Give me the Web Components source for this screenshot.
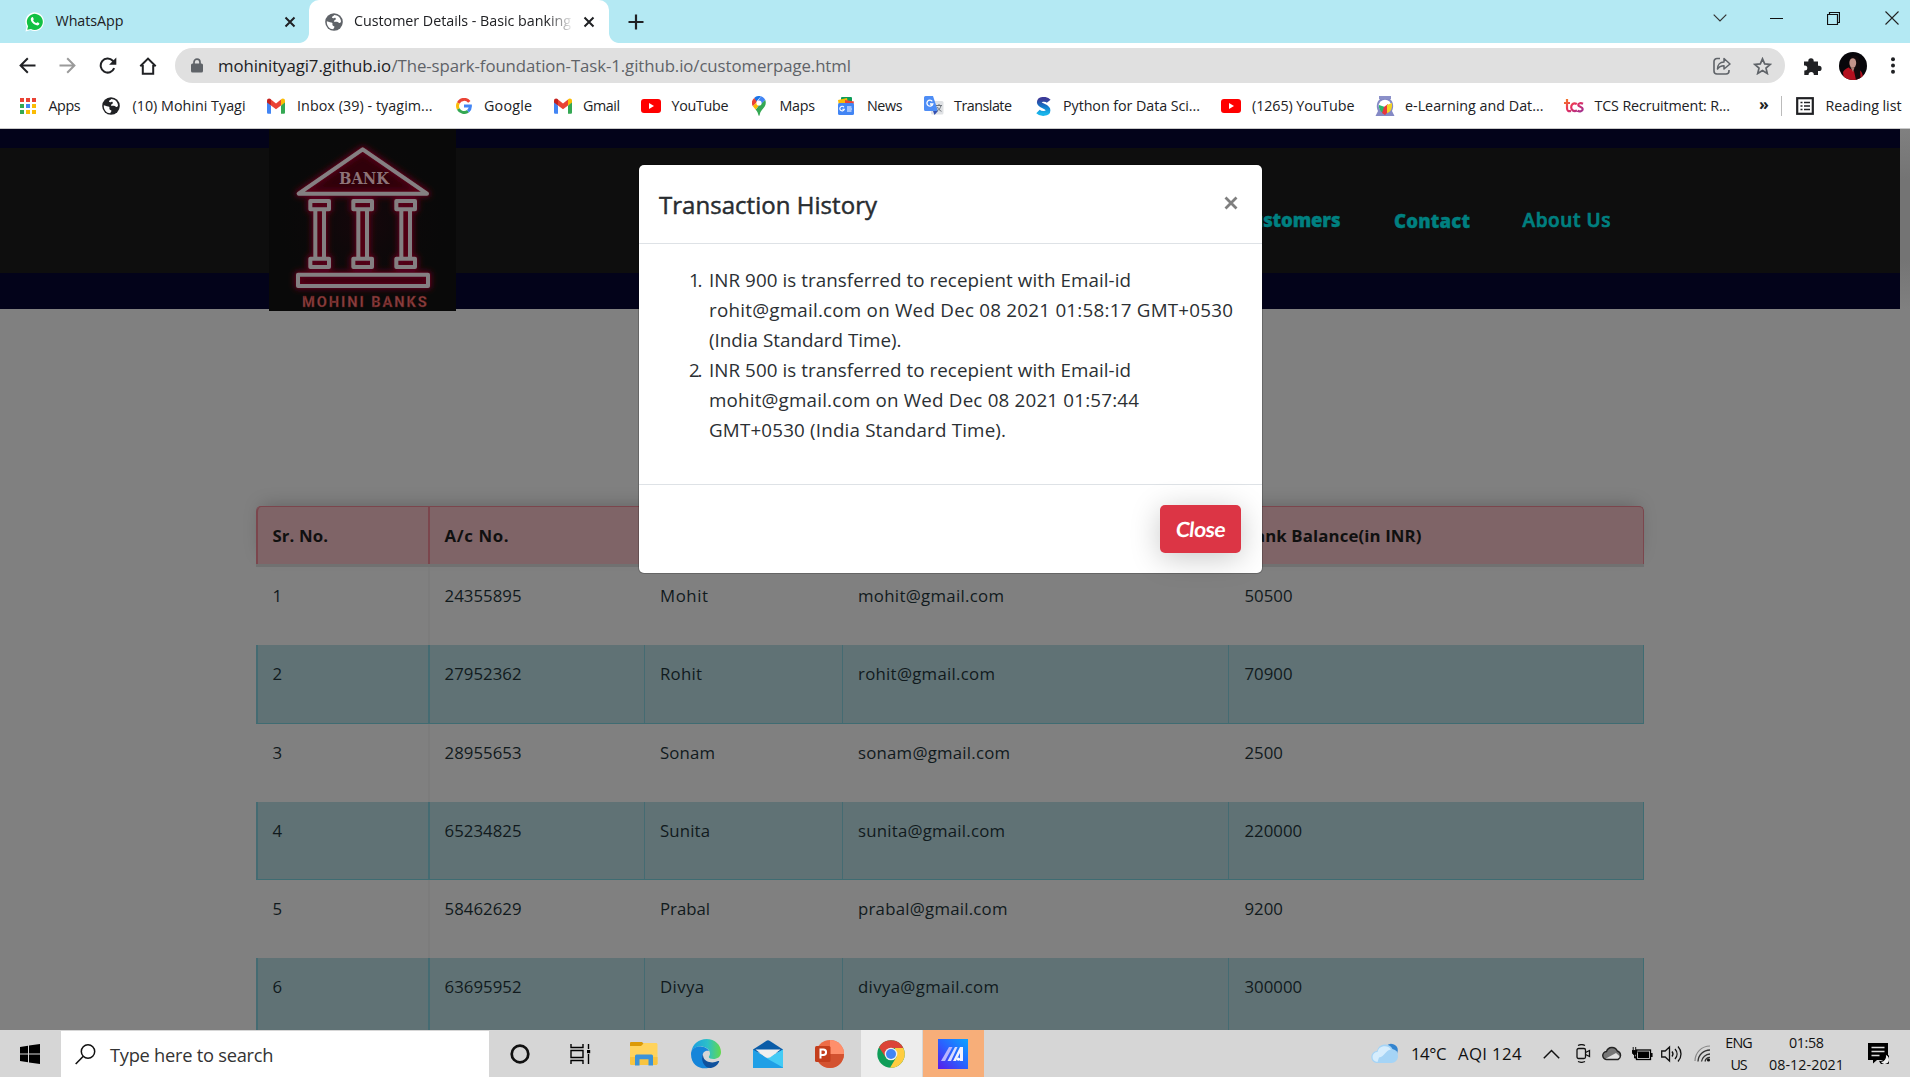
<!DOCTYPE html>
<html lang="en">
<head>
<meta charset="utf-8">
<title>Customer Details - Basic banking</title>
<style>
html,body{margin:0;height:100%;overflow:hidden;background:#808080}
body{font-family:"Open Sans","Noto Sans",sans-serif}
</style>
</head>
<body>
<desktop-screen></desktop-screen>
<script>
const svg=(w,h,body,vb)=>`<svg width="${w}" height="${h}" viewBox="${vb||`0 0 ${w} ${h}`}" fill="none" xmlns="http://www.w3.org/2000/svg">${body}</svg>`;
const GLOBE=c=>svg(18,18,`<circle cx="9" cy="9" r="8.8" fill="${c}"/><path d="M1.8 8.2c2.300 1 4.300.8 5.300 1.600 1 1-.2 1.800.6 2.600.9.8 2 .3 1.700 1.700-.2 1-1 1.400-1.200 2.200C4.500 16 1.500 13 1.800 8.200z" fill="#fff"/><path d="M9.200 2c-.6 1.300-2 1-2.200 2.300-.1 1 1.400 1 2.300.6 1-.4 1.700.4 1.500 1.300-.3 1-1.700.9-1.900 1.800-.1 1 1.600 1 2.700.7 1.600-.3 1.600 1.200 2.800 1.200.8 0 1.500-.6 1.600-1.500C15.800 4.800 12.700 2 9.200 2z" fill="#fff"/>`);
const GMAIL=svg(18,16,`<path d="M0 3v11.500c0 .8.600 1.300 1.300 1.300H4V7.500z" fill="#4285f4"/><path d="M18 3v11.500c0 .8-.6 1.300-1.300 1.300H14V7.500z" fill="#34a853"/><path d="M14 1.800V7.500l4-3V2.700C18 .6 15.800-.2 14.300 1z" fill="#fbbc04"/><path d="M4 7.500V1.600l5 3.800 5-3.800v5.900l-5 3.800z" fill="#ea4335"/><path d="M0 2.700v1.800l4 3V1.600L3.700 1C2.200-.2 0 .6 0 2.700z" fill="#c5221f"/>`);
const YT=svg(20,14,`<rect width="20" height="14" rx="3" fill="#f00"/><path d="M8 4l5 3-5 3z" fill="#fff"/>`);
const ICONS={
whatsapp:svg(20,20,`<path d="M.5 19.500l1.200-5A9.300 9.300 0 1 1 5.500 18z" fill="#fff"/><path d="M2.200 17.800l.9-3.600a8 8 0 1 1 2.900 2.700z" fill="#12c143"/><path d="M7 5.200c.6-.3 1 0 1.200.6l.5 1.200c.2.600-.7 1-.5 1.500.6 1.200 1.500 2 2.800 2.500.5.2.9-1 1.500-.8l1.600.8c.6.400.1 1.700-.6 2.100-1 .6-2.300.3-3.800-.5-1.800-1-3-2.400-3.700-4C5.500 7.200 6 5.700 7 5.200z" fill="#fff"/>`),
globeGrey:GLOBE('#5f6368'),globe:GLOBE('#202124'),
x:svg(12,12,`<path d="M1.500 1.500l9 9m0-9l-9 9" stroke="#202124" stroke-width="2"/>`),
plus:svg(16,16,`<path d="M8 .500v15M.5 8h15" stroke="#202124" stroke-width="2.200"/>`),
chev:svg(14,8,`<path d="M.7.700L7 7l6.300-6.300" stroke="#333" stroke-width="1.200"/>`),
min:svg(13,14,`<path d="M0 7.500h13" stroke="#111"/>`),
restore:svg(13,13,`<path d="M.5 2.500h10v10H.5zM2.500 2.500V.500h10v10h-2" stroke="#111" stroke-width="1.200"/>`),
close:svg(14,14,`<path d="M.5.500l13 13m0-13l-13 13" stroke="#222" stroke-width="1.100"/>`),
back:svg(17,17,`<path d="M16.500 8.500H2M8.800 1.300L1.600 8.500l7.200 7.200" stroke="#202124" stroke-width="2"/>`),
fwd:svg(17,17,`<path d="M.5 8.500H15M8.200 1.300l7.200 7.200-7.200 7.200" stroke="#9a9a9a" stroke-width="2"/>`),
reload:svg(18,17,`<path d="M15.200 11.200A7 7 0 1 1 13.800 3.800L16 6" stroke="#202124" stroke-width="2"/><path d="M17.300.5v7.200h-7.200z" fill="#202124"/>`),
home:svg(18,18,`<path d="M1.300 9.300L9 1.600l7.700 7.700M3.800 8v8.800h10.400V8" stroke="#202124" stroke-width="2"/>`),
lock:svg(12,15,`<path d="M3 6V4.200a3 3 0 0 1 6 0V6" stroke="#5f6368" stroke-width="1.700"/><rect y="5.500" width="12" height="9" rx="1.500" fill="#5f6368"/>`),
share:svg(18,18,`<path d="M7 1.500H4a3 3 0 0 0-3 3V14a3 3 0 0 0 3 3h9a3 3 0 0 0 3-3v-1" stroke="#5f6368" stroke-width="1.600"/><path d="M4.500 12C4.500 8 7 5 11 5V1.500L17 7l-6 5V8.700C8 8.700 6 9.500 4.500 12z" stroke="#5f6368" stroke-width="1.500" stroke-linejoin="round"/>`),
star:svg(19,18,`<path d="M9.500 1.800l2.200 5.100 5.500.5-4.200 3.700 1.300 5.400-4.800-2.900-4.800 2.900 1.300-5.400-4.200-3.700 5.500-.5z" stroke="#5f6368" stroke-width="1.700"/>`),
puzzle:svg(18,18,`<path d="M0 4.500h4.300V4a2.700 2.700 0 0 1 5.400 0v.5H14v4.300h1a2.600 2.600 0 0 1 0 5.200h-1V18H9.800v-.5a2.600 2.600 0 0 0-5.200 0v.5H.3v-4.500h.5a2.500 2.500 0 0 0 0-5H0z" fill="#202124"/>`),
avatar:svg(28,28,`<defs><clipPath id="c"><circle cx="14" cy="14" r="14"/></clipPath></defs><g clip-path="url(#c)"><rect width="28" height="28" fill="#07060a"/><path d="M4 20c2-3 4-4 7-5l8 2c4 2 5 5 5 11H5z" fill="#b3101f"/><path d="M10 16c-.5-7 .5-12.500 5.500-12.500S21 9 21 15l.5 11-4.500 2-2-9z" fill="#120a0c"/><ellipse cx="13.800" cy="11" rx="3.400" ry="4.800" fill="#c4948a"/><path d="M11.500 15l4 .5-1.500 4.500z" fill="#b07c72"/></g>`),
dots:svg(4,17,`<g fill="#202124"><circle cx="2" cy="2.200" r="2"/><circle cx="2" cy="8.500" r="2"/><circle cx="2" cy="14.800" r="2"/></g>`),
apps:svg(16,16,[['#ea4335','#ea4335','#ea4335'],['#34a853','#4285f4','#fbbc04'],['#34a853','#fbbc04','#fbbc04']].map((r,j)=>r.map((c,i)=>`<rect x="${i*6}" y="${j*6}" width="4" height="4" fill="${c}"/>`).join('')).join('')),
gmail:GMAIL,yt:YT,
google:svg(16,16,`<g stroke-width="3"><path d="M13.300 3.900A6.500 6.500 0 0 0 2.300 5" stroke="#ea4335"/><path d="M2.300 5a6.500 6.500 0 0 0 0 6" stroke="#fbbc05"/><path d="M2.300 11a6.500 6.500 0 0 0 9.700 2.200" stroke="#34a853"/><path d="M12 13.200A6.300 6.300 0 0 0 14.400 8H8" stroke="#4285f4"/></g>`),
maps:svg(14,20,`<path d="M2.200 1.900A7 7 0 0 1 9 .3L4 6z" fill="#1a73e8"/><path d="M2.200 1.900A7 7 0 0 0 .9 10.300L5 6z" fill="#ea4335"/><path d="M9 .3A7 7 0 0 1 13.300 4L6 12 3.500 9z" fill="#4285f4"/><path d="M13.300 4c1.500 4.500-.8 7-3 9.500C8.600 15.500 8 17 7.600 19.300 7.400 20 6.700 20 6.500 19.300 6 17 5 15 3.500 13.500z" fill="#34a853"/><path d="M.9 10.300l2.600 3.200 6-7-4.500-.5z" fill="#fbbc04"/><circle cx="7" cy="7" r="2.600" fill="#fff"/>`),
news:svg(18,18,`<rect x="4" y="0" width="11" height="9" rx="1" fill="#0c9d58"/><path d="M1 3l9-2 1 6-9 2z" fill="#fbbc04"/><path d="M8 3l9 1.500-1 5-8-1z" fill="#ea4335"/><rect x="1" y="6" width="16" height="12" rx="1.500" fill="#4285f4"/><path d="M7 10.300a2.300 2.300 0 1 0 .3 2H5.300M10 10h4.500M10 12h5M10 14h4.500" stroke="#fff" stroke-width="1.100"/>`),
translate:svg(20,20,`<rect x="7" y="5" width="12.500" height="13.500" rx="1.500" fill="#dfe1e4"/><path d="M1.500 0H9l5 15H1.500A1.500 1.500 0 0 1 0 13.500v-12A1.500 1.500 0 0 1 1.500 0z" fill="#4e8df5"/><path d="M9 15h5l-3.500 4z" fill="#3550b0"/><path d="M8.300 5.300A3 3 0 1 0 8.800 8H6" stroke="#fff" stroke-width="1.300"/><path d="M12 9.500h6M15 8v1.500M17 9.500c-.7 3-2 4.500-4 5.500M13.500 11c.7 2 2 3.300 4 4.300" stroke="#6f757c"/>`),
s:svg(15,19,`<defs><linearGradient id="g" x2="0" y2="1"><stop stop-color="#3b3b98"/><stop offset=".5" stop-color="#1076c8"/><stop offset="1" stop-color="#18b4ea"/></linearGradient></defs><path d="M12.700 4.300C10.500 1.500 3.500 1.500 3.300 5.300c-.1 4 8.700 3.500 8.700 8 0 4-7.300 4-10 1.200" stroke="url(#g)" stroke-width="4.800"/>`),
elearn:svg(20,20,`<path d="M4 0h12v3H4z" fill="#8b90c9"/><path d="M5 3C1.500 6 1 11 3 15l-2.500 5h19L17 15c2-4 1.500-9-2-12z" fill="#8489c5"/><circle cx="10" cy="10" r="6.300" fill="#fff"/><path d="M4 9l6 2v7C6 17 3.500 13 4 9z" fill="#29b56c"/><path d="M9 11l4-3v8l-3 3-3-2z" fill="#e8363d"/><path d="M12 9l5-2c.5 5-1 9-5 10z" fill="#f3d326"/>`),
tcs:svg(20,14,`<defs><linearGradient id="t" y2="1"><stop stop-color="#f58220"/><stop offset=".5" stop-color="#e6305f"/><stop offset="1" stop-color="#a03090"/></linearGradient></defs><path d="M3 0v9c0 3 1.500 3.500 4 3M0 4h6M12.800 5C9 3 7 6 7.200 8.500S9.500 13 13 11.500M19 4.700c-2-1-4.800-.7-4.800 1.200 0 2 4.500 1.600 4.500 4S15.500 13 13.500 11.800" stroke="url(#t)" stroke-width="2.200"/>`),
read:svg(18,18,`<rect x="1.200" y="1.200" width="15.600" height="15.600" stroke="#202124" stroke-width="2.200"/><path d="M4.500 5.500h2M8 5.500h6M4.500 9h2M8 9h6M4.500 12.500h2M8 12.500h6" stroke="#202124" stroke-width="1.600"/>`),
start:svg(20,20,`<path d="M0 3l8-1.200v7.700H0zM9 1.600L20 0v9.500H9zM0 10.500h8v7.700L0 17zM9 10.500h11V20L9 18.400z" fill="#000"/>`),
search:svg(21,21,`<circle cx="13" cy="7.500" r="6.700" stroke="#111" stroke-width="1.500"/><path d="M8.300 12.300L.7 20" stroke="#111" stroke-width="1.600"/>`),
ring:svg(20,20,`<circle cx="10" cy="10" r="8.300" stroke="#111" stroke-width="2.700"/>`),
task:svg(21,20,`<path d="M1 0v3.500h12V0M1 6.500h12v7H1zM1 20v-3.500h12V20M18.500 0v5M18.500 10v10" stroke="#000" stroke-width="1.400"/><rect x="17" y="6" width="3.200" height="3.200" fill="#000"/>`),
folder:svg(28,24,`<path d="M0 1a1 1 0 0 1 1-1h11l2 2-2 3H0z" fill="#dc9a06"/><path d="M0 4h11l3-3h12.500l1 1v20l-1 1H1l-1-1z" fill="#ffd35c"/><path d="M0 15h27.500v7l-1 1H1l-1-1z" fill="#f8c440"/><path d="M5 23.500V14a1.500 1.500 0 0 1 1.500-1.500h15A1.500 1.500 0 0 1 23 14v9.500h-4.500v-6.300h-9v6.300z" fill="#3b93d8"/>`),
edge:svg(30,30,`<defs><linearGradient id="e1" x2="1"><stop stop-color="#1b9de2"/><stop offset=".55" stop-color="#2cc0c8"/><stop offset="1" stop-color="#62d94b"/></linearGradient></defs><path d="M.3 13C1.500 5 8 0 15.500 0 24 0 30 6 30 13c0 5-4 7-7.500 7-3 0-4.700-1-4.700-2 0-.8 1.200-1.300 1.200-3.500C19 10 14 7.500 9.500 7.500 5 7.500 1.500 9.500.3 13z" fill="url(#e1)"/><path d="M0 15C0 10 4.500 7.300 9.500 7.500c4 .2 7.500 2 8.500 4.500-4-1.500-7 2-6.500 6 .5 5 5 9 10 9.300C14 32 0 29 0 15z" fill="#1585da"/><path d="M11.800 15C9.500 21 13 29.500 20 29c3.500-.5 6.500-2.800 8-6 .5-1-.2-1.300-1-.9-5 2.500-12.500 1.500-14.500-3.600-.3-1-.6-2.500-.7-3.500z" fill="#0f519d"/>`),
mail:svg(30,28,`<path d="M0 9.500L13.500.8a3 3 0 0 1 3 0L30 9.500v3H0z" fill="#0a5ca8"/><path d="M0 9.500l15 9 15-9V28H0z" fill="#1f9fe6"/><path d="M30 9.500v18L14 18.500z" fill="#43cbf5"/><path d="M2.500 9.500h25L17 17.500l-4 0z" fill="#efefef"/>`),
ppt:svg(29,28,`<circle cx="15" cy="14" r="14" fill="#ed6c47"/><path d="M15 0a14 14 0 0 1 14 14H15z" fill="#ff8f6b"/><path d="M1 14h28A14 14 0 0 1 1 14z" fill="#d35230"/><rect y="6" width="15.500" height="16" rx="1.500" fill="#c43e1c"/><path d="M5.500 18.500v-9h2.800a2.700 2.700 0 0 1 0 5.500H5.500" stroke="#fff" stroke-width="2"/>`),
chrome:svg(28,28,`<circle cx="14" cy="14" r="13.700" fill="#0f9d58"/><path d="M2 7.200A13.700 13.700 0 0 1 26.300 8H14l-5.500 9z" fill="#db4437"/><path d="M26.300 8A13.700 13.700 0 0 1 13 27.700L19.500 17 18 8z" fill="#ffcd40"/><circle cx="14" cy="14" r="6.300" fill="#f1f1f1"/><circle cx="14" cy="14" r="5" fill="#4285f4"/>`),
ma:svg(30,30,`<defs><linearGradient id="m" x1="0" y1="1" x2="1" y2="0"><stop stop-color="#5a1be8"/><stop offset=".5" stop-color="#2a62ff"/><stop offset="1" stop-color="#0aa4ff"/></linearGradient></defs><rect width="30" height="30" fill="url(#m)"/><path d="M3 22l8-14h3.500L7 22z" fill="#b9b4ff"/><path d="M9.500 22l7.500-14h2.500L13 22z" fill="#d8dcff"/><path d="M15 22l7-14h3v14h-3v-8l-4 8z" fill="#f2f2ff"/><circle cx="20.500" cy="20.200" r="1.600" fill="#fff"/>`),
cloud:svg(28,21,`<path d="M15 3.500A6.500 6.500 0 0 1 26.500 9l-1 4z" fill="#3384cf"/><path d="M6.500 20A6 6 0 0 1 6 8 8.300 8.300 0 0 1 21.500 6 7 7 0 0 1 27 13c0 4-3 7-6.500 7z" fill="#a5d4f6"/><path d="M6.500 19A5 5 0 0 1 6.500 9 7.500 7.500 0 0 1 20 6.500c-6 1-6 7-12 8z" fill="#d6edfd"/>`),
up:svg(17,10,`<path d="M.8 9.200l7.700-7.700 7.700 7.700" stroke="#111" stroke-width="1.500"/>`),
cam:svg(15,19,`<rect x="1" y="4.500" width="8.500" height="10" rx="1.500" stroke="#111" stroke-width="1.300"/><path d="M9.500 8.500l4-2v6l-4-2M2 1.500C4 .5 7 .5 9 1.500M2 17.500c2 1 5 1 7 0" stroke="#111" stroke-width="1.300"/>`),
drive:svg(21,15,`<path d="M5 13.500a4 4 0 0 1-.5-8A5.800 5.800 0 0 1 15.300 5 4.600 4.600 0 0 1 16 13.500z" fill="#777"/><path d="M3 13l11-6 5 4.500-3 2z" fill="#e2e2e2"/><path d="M5 13.500a4 4 0 0 1-.5-8A5.800 5.800 0 0 1 15.300 5 4.600 4.600 0 0 1 16 13.500z" stroke="#222" stroke-width="1.400"/>`),
batt:svg(21,14,`<rect x="4.500" y="3" width="14" height="9.500" stroke="#000" stroke-width="1.300"/><rect x="6" y="4.500" width="11" height="6.500" fill="#000"/><path d="M19.800 6v4" stroke="#000" stroke-width="1.500"/><path d="M0 3.500h5v2L3.500 7.500h-2L0 5.500zM1.200 0v3M3.700 0v3M2.500 7v4h2" fill="#000" stroke="#000" stroke-width=".9"/>`),
vol:svg(22,18,`<path d="M.7 6h3.500L8.500 2v14l-4.300-4H.7zM11 6.500c1.200 1.500 1.200 3.500 0 5M14 4c2.700 3 2.700 7 0 10M17 1.500c4 4.300 4 10.700 0 15" stroke="#111" stroke-width="1.300"/>`),
wifi:svg(17,17,`<path d="M1 16A15 15 0 0 1 16 1" stroke="#888" stroke-width="1.200"/><path d="M4 16.500A12 12 0 0 1 16 5M7.500 16.500A9 9 0 0 1 16 9M11 16.500a5 5 0 0 1 5-4" stroke="#333" stroke-width="1.300"/><circle cx="14.500" cy="15" r="1.600" fill="#111"/>`),
notif:svg(21,21,`<path d="M0 0h20v17H9l-4 3.500V17H0z" fill="#000"/><path d="M3.500 4.500h13M3.500 8.500h13M3.500 12.500h8" stroke="#ddd" stroke-width="1.700"/><path d="M17 11.500a5 5 0 1 1-5 7 5 5 0 0 0 5-7z" fill="#eee" stroke="#000" stroke-width="1.200"/>`),
mclose:svg(14,14,`<path d="M1.500 1.500l11 11m0-11l-11 11" stroke="#7f7f7f" stroke-width="2.800"/>`)
};
const define=(name,html,after)=>customElements.define(name,class extends HTMLElement{
  connectedCallback(){
    if(!this.shadowRoot){this.attachShadow({mode:'open'}).innerHTML=typeof html==='function'?html(this):html;}
    if(after)after(this);
  }
});
/* One line of text whose tracking is tuned so that it fills the width "w". */
define('text-run',`<style>:host{display:block;flex:none;white-space:nowrap;line-height:1.4}span{display:inline-block}</style><span><slot></slot></span>`,el=>{
  const w=+el.getAttribute('w'),s=el.getAttribute('s');
  if(s)el.style.fontSize=s+'px';
  if(w){
    el.style.width=w+'px';
    const n=el.textContent.length,nat=el.shadowRoot.querySelector('span').getBoundingClientRect().width;
    el.style.letterSpacing=((w-nat)/Math.max(1,n-1)).toFixed(3)+'px';
  }
});
define('app-icon',el=>`<style>:host{display:block;flex:none}svg{display:block}</style>${ICONS[el.getAttribute('name')]}`);
/* Places items in a flex line: [left, width, markup]; margins carry the gaps. */
const line=items=>{let p=0;return items.map(([x,w,h])=>{const m=x-p;p=x+w;return `<div class="i" style="margin-left:${m.toFixed(1)}px;width:${w}px">${h}</div>`}).join('')};
const I=(n,x,w)=>[x,w,`<app-icon name="${n}"></app-icon>`];
const T=(t,x,w,s)=>[x,w,`<text-run w="${w}" s="${s}">${t}</text-run>`];
const LINE=`.i{flex:none}`;

define('tab-strip',`<style>:host{display:flex;align-items:center;height:43px;background:#b4e9f3;color:#202124}${LINE}
.l{display:flex;align-items:center;width:299px;height:43px;flex:none}
.foot{width:10px;height:43px;flex:none}
.f1{background:radial-gradient(circle at 0 0,#b4e9f3 9.500px,#fff 10.300px) 0 33px/10px 10px no-repeat}
.f2{background:radial-gradient(circle at 100% 0,#b4e9f3 9.500px,#fff 10.300px) 0 33px/10px 10px no-repeat}
.tab{display:flex;align-items:center;width:300px;height:43px;background:#fff;border-radius:10px 10px 0 0}
.fade{-webkit-mask:linear-gradient(90deg,#000 192px,transparent 220px)}
.r{display:flex;align-items:center;height:36px;align-self:flex-start}
</style>
<div class="l">${line([I('whatsapp',25,20),T('WhatsApp',55.500,68,14.300),I('x',284,12)])}</div>
<div class="foot f1"></div><div class="tab">${line([I('globeGrey',16,18),[45,218,'<text-run class="fade" w="217" s="14.3">Customer Details - Basic banking</text-run>'],I('x',273.500,12)])}</div><div class="foot f2"></div>
${line([I('plus',9,16)])}<div class="r">${line([I('chev',1068.500,14),I('min',1125.500,13),I('restore',1183,13),I('close',1240.500,14)])}</div>`);

define('address-bar',`<style>:host{display:flex;align-items:center;height:45px;background:#fff}${LINE}
.o{display:flex;align-items:center;width:1610px;height:35px;border-radius:18px;background:#e0e0e0;flex:none;margin-left:18.500px;color:#5f6368}
.h{color:#202124}</style>
${line([I('back',19,17),I('fwd',59,17),I('reload',99,18),I('home',138.500,18)])}
<div class="o">${line([I('lock',15.500,12),[43,173,'<text-run class="h" w="173" s="16.8">mohinityagi7.github.io</text-run>'],T('/The-spark-foundation-Task-1.github.io/customerpage.html',216.500,459.500,16.800),I('share',1538,18),I('star',1577.500,19)])}</div>
${line([I('puzzle',18.500,18),I('avatar',54,28),I('dots',105.500,4)])}`);

define('bookmarks-bar',`<style>:host{display:flex;align-items:center;height:36px;padding-bottom:4px;background:#fff;border-bottom:1px solid #c9c9c9;color:#202124}${LINE}
.sep{width:1px;height:20px;background:#bbb}b{font-weight:700}</style>
${line([I('apps',20,16),T('Apps',48.500,32,14.300),I('globe',102,18),T('(10) Mohini Tyagi',132.500,113,14.300),I('gmail',267,18),T('Inbox (39) - tyagim...',297,135.500,14.300),I('google',456,16),T('Google',484,48,14.300),I('gmail',554,18),T('Gmail',583,37,14.300),I('yt',641,20),T('YouTube',671.500,57,14.300),I('maps',752,14),T('Maps',779.500,35.500,14.300),I('news',837,18),T('News',867,35.500,14.300),I('translate',924,20),T('Translate',954,58,14.300),I('s',1035.500,15),T('Python for Data Sci...',1063,137,14.300),I('yt',1221,20),T('(1265) YouTube',1252,102.500,14.300),I('elearn',1375,20),T('e-Learning and Dat...',1405,138.500,14.300),I('tcs',1564,20),T('TCS Recruitment: R...',1594.500,135.500,14.300),[1759,10,'<b><text-run s="16" style="margin-top:-3px">»</text-run></b>'],[1781,1,'<div class="sep"></div>'],I('read',1796,18),T('Reading list',1825.500,76,14.300)])}`);

define('bank-logo',`<style>:host{display:block;width:187px;height:182px}svg{display:block}</style>
<svg width="187" height="182" viewBox="87 27 561 546"><defs><filter id="b" x="-30%" y="-30%" width="160%" height="160%"><feGaussianBlur stdDeviation="9"/></filter><filter id="s"><feGaussianBlur stdDeviation="3"/></filter><radialGradient id="r"><stop stop-color="#3a0010" stop-opacity=".3"/><stop offset="1" stop-color="#0a0a0a" stop-opacity="0"/></radialGradient>
<g id="k" fill="none" stroke-linejoin="round"><path d="M368 88L176 221H561z"/><path d="M211 243h56v25h-56zM340 243h56v25h-56zM469 243h56v25h-56zM211 416h56v25h-56zM340 416h56v25h-56zM469 416h56v25h-56zM226 270v144M252 270v144M355 270v144M381 270v144M484 270v144M510 270v144M174 464h390v34H174z"/></g></defs>
<rect x="87" y="27" width="561" height="546" fill="#090909"/><ellipse cx="368" cy="310" rx="260" ry="260" fill="url(#r)"/>
<path d="M368 88L176 221H561zM226 250h26v180h-26zM355 250h26v180h-26zM484 250h26v180h-26zM174 464h390v34H174z" fill="#30000a"/>
<use href="#k" stroke="#5a061a" stroke-width="20" filter="url(#b)"/><use href="#k" stroke="#5a0c1c" stroke-width="13" filter="url(#s)"/><use href="#k" stroke="#848082" stroke-width="12"/>
<text x="297" y="192" textLength="150" lengthAdjust="spacingAndGlyphs" font-family="DejaVu Serif" font-weight="700" font-size="52" fill="#8d7478">BANK</text>
<text x="186" y="561" textLength="374" font-family="Roboto" font-weight="700" font-size="44" fill="#874040" stroke="#5a1010" stroke-width="1">MOHINI BANKS</text></svg>`);

define('site-header',`<style>:host{display:flex;align-items:flex-start;height:180px;width:1900px;background:linear-gradient(#03031a 19px,#0e0e0e 19px,#0e0e0e 144px,#03031a 144px);color:#008080;font-weight:700}
bank-logo{margin-left:269px}.n{display:flex;align-items:center;height:182px}.i{flex:none}.c{font-weight:800;padding-top:2px;-webkit-text-stroke:.4px #008080}.u{font-weight:600;-webkit-text-stroke:.7px #008080}</style>
<bank-logo></bank-logo><nav class="n">
${line([[783,101.500,'<text-run class="c" style="padding:0" w="101.5" s="18.5">Customers</text-run>'],[938,76,'<text-run class="c" w="76" s="18.5">Contact</text-run>'],[1066.500,88,'<text-run class="u" w="88" s="19">About Us</text-run>']])}</nav>`);

const ROWS=[['1','24355895','Mohit',48,'mohit@gmail.com',146,'50500'],['2','27952362','Rohit',42,'rohit@gmail.com',137,'70900'],['3','28955653','Sonam',55,'sonam@gmail.com',152,'2500'],['4','65234825','Sunita',50,'sunita@gmail.com',147,'220000'],['5','58462629','Prabal',50,'prabal@gmail.com',149.500,'9200'],['6','63695952','Divya',44,'divya@gmail.com',141,'300000']];
const cell=(t,w)=>`<div><text-run w="${w}" s="16.8">${t}</text-run></div>`;
define('customer-table',`<style>:host{display:block;width:1388px;color:#111a1d}
.r{display:grid;grid-template-columns:172px 215.500px 198px 386.500px 416px;height:78.250px;box-sizing:border-box}
.r>div{padding:17.100px 0 0 15.500px;box-sizing:border-box;border-left:1px solid transparent}
.r>div:first-child,.r>div:nth-child(2){border-left-width:2px;padding-left:14.500px}
.o>div:nth-child(2){border-color:#7c7c7c}
.e{background:#607275;border-bottom:1px solid #3f6c72;border-right:1px solid #3f6c72}.e>div{border-color:#456b72}
.h{height:58px;background:#7f6467;border-top:1px solid #7b464d;border-right:1px solid #7b464d;border-radius:5px 5px 0 0;font-weight:700;color:#101010;box-shadow:0 -6px 18px -6px rgba(0,0,0,.25)}
.h>div{padding-top:16.500px}.h>div:nth-child(5){padding-left:14.500px}.h>div:first-child,.h>div:nth-child(2){border-color:#7b464d}.h>div:first-child{border-radius:5px 0 0}
.b{height:3px;background:#717171}</style>
<div class="r h">${cell('Sr. No.',55.500)}${cell('A/c No.',64)}${cell('',0)}${cell('',0)}${cell('Bank Balance(in INR)',178)}</div><div class="b"></div>
${ROWS.map((r,i)=>`<div class="r ${i%2?'e':'o'}">${cell(r[0],9)}${cell(r[1],77)}${cell(r[2],r[3])}${cell(r[4],r[5])}${cell(r[6],r[6].length*9.600)}</div>`).join('')}`);

const rl=(t,w)=>`<text-run w="${w}" s="18.8">${t}</text-run>`;
define('history-dialog',`<style>:host{display:flex;flex-direction:column;width:623px;height:408px;border-radius:5px;background:#fff;box-shadow:0 0 0 1px rgba(0,0,0,.2);color:#2b2f33}
header{display:flex;justify-content:space-between;align-items:flex-start;height:79px;box-sizing:border-box;border-bottom:1px solid #dee2e6;padding:22px 24px 0 20px}
header text-run{line-height:36px;-webkit-text-stroke:.45px #212529}header app-icon{padding-top:9px}
main{height:241px;padding:21px 0 0 50px;box-sizing:border-box;border-bottom:1px solid #dee2e6}
.e{display:grid;grid-template-columns:20px auto}text-run{line-height:30px}
footer{display:flex;justify-content:flex-end;padding:20px 21px 0 0}
.btn{display:flex;align-items:center;justify-content:center;width:81px;height:48px;border-radius:5px;background:#dc3545;box-shadow:0 5px 30px rgba(0,0,0,.22);color:#fff;font-family:Lato,sans-serif;font-weight:700}
.skew{transform:skewX(-6deg)}</style>
<header><text-run w="218" s="24">Transaction History</text-run><app-icon name="mclose"></app-icon></header>
<main><div class="e">${rl('1.',13.500)}<div>${rl('INR 900 is transferred to recepient with Email-id',422)}${rl('rohit@gmail.com on Wed Dec 08 2021 01:58:17 GMT+0530',524)}${rl('(India Standard Time).',192.500)}</div></div>
<div class="e">${rl('2.',13.500)}<div>${rl('INR 500 is transferred to recepient with Email-id',422)}${rl('mohit@gmail.com on Wed Dec 08 2021 01:57:44',430)}${rl('GMT+0530 (India Standard Time).',297)}</div></div></main>
<footer><div class="btn"><div class="skew"><text-run w="53" s="21" style="margin-right:-4px">Close</text-run></div></div></footer>`);

define('web-page',`<style>:host{display:block;height:901px;overflow:hidden;background:#808080;position:relative}
.top{display:flex}.track{width:10px;height:180px;background:linear-gradient(#808080,#747474 50px,#747474 130px,#808080)}
customer-table{margin:197px 0 0 256px}history-dialog{position:absolute;left:639px;top:36px}</style>
<div class="top"><site-header></site-header><div class="track"></div></div><customer-table></customer-table><history-dialog></history-dialog>`);

define('task-bar',`<style>:host{display:flex;align-items:center;height:47px;background:#d6d6d6;color:#111}${LINE}
.s{display:flex;align-items:center;width:428px;height:46px;margin:1px 0 0 21px;background:#fff;flex:none;color:#333}
.t{display:flex;align-items:center;justify-content:center;width:61px;height:47px;flex:none;box-sizing:border-box;padding-right:1.500px}.c{background:#ededed;margin-left:17px}.m{background:#f7ae79;margin-left:1px}
.i>text-run{padding-top:1.500px}
.k{display:flex;flex-direction:column;align-items:center;gap:2px;padding-top:1.500px}.k text-run{line-height:20px}</style>
${line([I('start',20,20)])}<div class="s">${line([I('search',14,21),T('Type here to search',49,163.500,18.300)])}</div>
${line([I('ring',20.500,20),I('task',80.500,21),I('folder',141,28),I('edge',202,30),I('mail',264,30),I('ppt',326,29)])}
<div class="t c"><app-icon name="chrome"></app-icon></div><div class="t m"><app-icon name="ma"></app-icon></div>
${line([I('cloud',387,28),T('14°C',427,35.500,16.800),T('AQI 124',474,63.500,16.800),I('up',559,17),I('cam',591.500,15),I('drive',617.500,21),I('batt',647.500,21),I('vol',677,22),I('wifi',709.500,17),[741,28,'<div class="k"><text-run w="27.500" s="14.3">ENG</text-run><text-run w="17" s="14.3">US</text-run></div>'],[785,75,'<div class="k"><text-run w="35" s="14.3">01:58</text-run><text-run w="75" s="14.3">08-12-2021</text-run></div>'],I('notif',883.500,21)])}`);

define('desktop-screen',`<style>:host{display:flex;flex-direction:column;width:1910px;height:1077px;overflow:hidden}</style>
<tab-strip></tab-strip><address-bar></address-bar><bookmarks-bar></bookmarks-bar><web-page></web-page><task-bar></task-bar>`);
</script>
</body>
</html>
